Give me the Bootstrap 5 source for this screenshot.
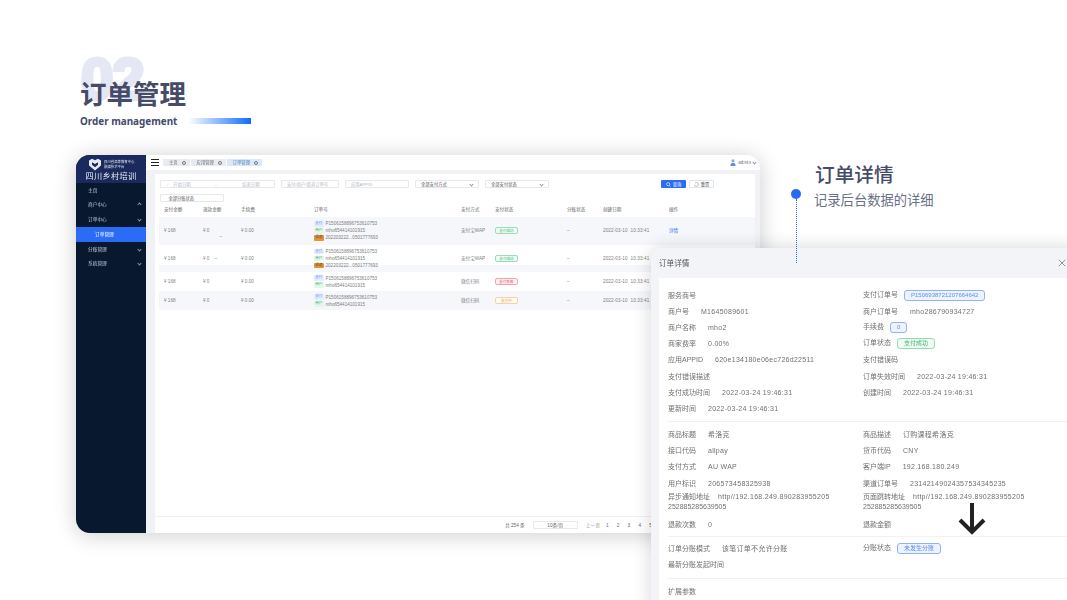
<!DOCTYPE html>
<html lang="zh-CN">

<head>
    <meta charset="UTF-8">
    <title>订单管理</title>
    <link href="https://cdn.jsdelivr.net/npm/bootstrap@5.3.0/dist/css/bootstrap.min.css" rel="stylesheet">
    <style>
        html, body {
            margin: 0;
            height: 600px;
            overflow: hidden;
            background: #fff;
            font-family: "Liberation Sans", "Noto Sans CJK SC", sans-serif;
        }

        .slide { position: relative; width: 1067px; height: 600px; overflow: hidden; }

        /* heading */
        .head-block { position: relative; padding: 77px 0 0 80px; }
        .ghost-no {
            position: absolute; left: 81px; top: 50px;
            font: 700 58px/1 "Liberation Sans", sans-serif;
            color: #e5e8f4; -webkit-text-stroke: 4px #e5e8f4; letter-spacing: -1px;
        }
        .head-title {
            position: relative; margin: 0;
            font: 700 26.5px/32px "Noto Sans CJK SC", sans-serif; color: #454b69;
        }
        .head-sub { position: relative; margin-top: 3px; gap: 11px; font: 700 9.9px/18px "Noto Sans", "Open Sans", sans-serif; color: #454b69; }
        .head-bar { width: 63px; height: 5.5px; background: linear-gradient(90deg, #fff, #0f6bff); }

        /* callout */
        .callout { position: absolute; left: 814px; top: 160px; }
        .callout-title { font: 500 19.7px/28px "Noto Sans CJK SC", sans-serif; color: #454b69; margin: 0 0 0 1px; }
        .callout-sub { font: 400 13.3px/20px "Noto Sans CJK SC", sans-serif; color: #6a7089; margin-top: 2px; }
        .pin-dot { position: absolute; left: 791px; top: 189px; width: 10px; height: 10px; border-radius: 50%; background: #2b6af2; z-index: 5; }
        .pin-line { position: absolute; left: 795.5px; top: 199px; height: 64px; border-left: 1px dotted #2b6af2; z-index: 5; }

        /* app window */
        .app-window {
            position: absolute; left: 76px; top: 155px; width: 684px; height: 378px;
            border-radius: 14px; overflow: hidden; background: #f1f2f6;
            box-shadow: 0 2px 22px rgba(0, 0, 0, .2);
            font-size: 4.7px; line-height: 7px; color: #777;
            font-family: "Liberation Sans", "Noto Sans CJK SC", sans-serif;
            filter: blur(.3px);
        }
        .side-nav { width: 70px; flex: none; background: #07182f; color: #c3cad8; }
        .side-brand { height: 28px; background: #1b2a5c; color: #fff; padding-top: 3px; }
        .brand-logo { gap: 2px; padding-left: 12px; height: 13px; }
        .brand-lines { font-size: 3.4px; line-height: 4.4px; color: #dfe3ee; }
        .brand-name { font-size: 8.2px; line-height: 11px; text-align: center; color: #e9ecf5; letter-spacing: .35px; }
        .side-item { height: 14.6px; padding: 0 5px 0 12px; }
        .side-item.active { background: #2b6cf6; color: #fff; padding-left: 19px; height: 15px; }
        .chev { display: inline-block; width: 3px; height: 3px; border-right: .6px solid #8d96a8; border-bottom: .6px solid #8d96a8; transform: rotate(45deg); }
        .chev.up { transform: rotate(225deg); }

        .top-strip { height: 15px; background: #fff; padding: 0 4px 0 5px; }
        .burger { width: 8px; height: 7px; border-top: 1px solid #222; border-bottom: 1px solid #222; position: relative; margin-right: 4px; }
        .burger::after { content: ""; position: absolute; left: 0; right: 0; top: 1.6px; border-top: 1px solid #222; }
        .tab-chip { height: 7px; background: #e9ebf0; padding: 0 4px 0 6px; margin-right: 1px; gap: 4px; color: #6c7280; font-size: 4.3px; }
        .tab-chip.current { background: #d8e9fb; color: #5a7fa8; }
        .tab-x { width: 4px; height: 4px; border: .5px solid #777; border-radius: 50%; }
        .who { gap: 2px; color: #777; }

        .work-card { position: absolute; left: 79px; top: 19px; width: 600px; bottom: 0; background: #fff; }
        .filter-line { height: 8px; padding-left: 5px; gap: 6px; margin-top: 6px; }
        .fbox { height: 8px; border: .5px solid #e6e8ec; border-radius: 1px; color: #b5b9c2; font-size: 4.3px; padding: 0 5px; flex: none; }
        .fbox.set { color: #555; }
        .w-range { width: 115px; }
        .w-key { width: 58px; }
        .w-app { width: 64px; }
        .w-sel { width: 64px; }
        .fbtn { height: 8px; width: 25px; font-size: 4.3px; gap: 2px; border-radius: 1px; }
        .fbtn-go { background: #2b6cf6; color: #fff; margin-left: 106px; }
        .fbtn-back { border: .5px solid #e3e5ea; color: #555; margin-left: -3px; }
        .grid-line {
            display: grid;
            grid-template-columns: 44px 38px 73px 147px 34px 72px 36px 66px 86px;
            align-items: center; margin-left: 4px; color: #808080; font-size: 4.6px;
        }
        .grid-line > div { min-width: 0; white-space: nowrap; }
        .line-head { height: 15px; color: #666; }
        .line-head > div:first-child, .grid-line > .money { padding-left: 5px; }
        .line-a { height: 27.5px; }
        .line-b { height: 19px; }
        .tint { background: #f5f7fa; }
        .tint-low { background: linear-gradient(#fff 20px, #f5f7fa 20px); }
        .dash-low { position: absolute; margin: 6px 0 0 10px; }
        .id-tag { display: inline-block; width: 9.5px; height: 5.6px; line-height: 5.6px; border-radius: 1px; text-align: center; font-size: 3.6px; margin-right: 2px; vertical-align: middle; }
        .t-pay { background: #e4edff; color: #5d8df0; }
        .t-mch { background: #e3f7ea; color: #4cb874; }
        .t-chn { background: #e0953c; color: #6e4a1c; }
        .stamp { letter-spacing: .12px; }
        .state-tag { display: inline-block; width: 23px; height: 7.4px; line-height: 6.4px; border-radius: 2px; text-align: center; font-size: 3.6px; border: .6px solid; }
        .s-ok { border-color: #9bdcb8; color: #41b677; background: #f1fbf5; }
        .s-bad { border-color: #f6a3ac; color: #e9414f; background: #fff3f4; }
        .s-wait { border-color: #f4d3a5; color: #e7a045; background: #fffaf2; }
        .act-link { color: #2b6cf6; }
        .pager { position: absolute; left: 0; right: 0; bottom: 0; height: 17px; border-top: .5px solid #f0f1f4; padding-left: 350px; color: #666; }
        .pager .pbox { width: 45px; height: 8px; border: .5px solid #e6e8ec; border-radius: 1px; margin: 0 8px; text-align: center; line-height: 7px; }
        .pager .pn { width: 10.8px; text-align: center; }
        .pager .prev-pg { margin-right: 2px; }

        /* detail dialog */
        .detail-box {
            position: absolute; left: 651px; top: 248px; width: 430px; height: 370px;
            border-radius: 10px; background: #f3f4f8;
            box-shadow: 0 0 18px rgba(0, 0, 0, .17);
            color: #707070; font-size: 7px; line-height: 9px;
            filter: blur(.25px);
        }
        .detail-top { height: 30px; padding-left: 8px; font-size: 7.6px; color: #555; }
        .detail-x { position: absolute; left: 407px; top: 11px; }
        .detail-panel { background: #fff; margin-left: 8px; height: 340px; padding: 9px 0 0 9px; }
        .kv-grid { display: grid; grid-template-columns: 195px 1fr; grid-auto-rows: 16.2px; align-items: center; }
        .kv-grid > div { white-space: nowrap; }
        .kv-grid span.v { margin-left: 12px; letter-spacing: .28px; }
        .kv-grid span.v.near { margin-left: 8px; }
        .kv-tall { grid-auto-rows: 26px; line-height: 10px; margin-top: -2px; margin-bottom: 1px; }
        .rule { height: 1px; background: #f0f1f4; margin: 4px 0 5px; }
        .rule.tight { margin-bottom: 3px; }
        .rule.wide { margin: 5.5px 0 4px; }
        .soft-pill { display: inline-block; height: 11px; line-height: 9.6px; border: .7px solid; border-radius: 3px; padding: 0 6px; font-size: 6px; margin-left: 6px; vertical-align: middle; }
        .p-blue { border-color: #8fb2ff; background: #edf3ff; color: #5d8df0; }
        .p-green { border-color: #93dcb2; background: #effbf3; color: #3fb673; }
        .down-mark { position: absolute; left: 958px; top: 502px; z-index: 6; }
    </style>
</head>

<body>
    <div class="slide">
        <div class="head-block">
            <div class="ghost-no">02</div>
            <h1 class="head-title">订单管理</h1>
            <div class="head-sub d-flex align-items-center">
                <span>Order management</span>
                <span class="head-bar"></span>
            </div>
        </div>

        <div class="callout">
            <h2 class="callout-title">订单详情</h2>
            <div class="callout-sub">记录后台数据的详细</div>
        </div>
        <div class="pin-dot"></div>
        <div class="pin-line"></div>

        <div class="app-window d-flex">
            <div class="side-nav">
                <div class="side-brand">
                    <div class="brand-logo d-flex align-items-center">
                        <svg width="14" height="13" viewBox="0 0 14 13">
                            <path d="M1 2.5 4 .8 7 2.3 10 .8 13 2.5V7.5L7 12.5 1 7.5Z" fill="#e6e9f2" />
                            <path d="M4 4.2 7 6 10 4.2V6.8L7 9.3 4 6.8Z" fill="#1b2a5c" />
                        </svg>
                        <div class="brand-lines">四川省高等教育中心<br>融媒技术平台</div>
                    </div>
                    <div class="brand-name">四川乡村培训</div>
                </div>
                <div class="side-item d-flex align-items-center">主页</div>
                <div class="side-item d-flex align-items-center justify-content-between">商户中心<i class="chev up"></i></div>
                <div class="side-item d-flex align-items-center justify-content-between">订单中心<i class="chev"></i></div>
                <div class="side-item active d-flex align-items-center">订单管理</div>
                <div class="side-item d-flex align-items-center justify-content-between">分账管理<i class="chev"></i></div>
                <div class="side-item d-flex align-items-center justify-content-between">系统管理<i class="chev"></i></div>
            </div>

            <div class="flex-grow-1">
                <div class="top-strip d-flex align-items-center">
                    <div class="burger"></div>
                    <div class="tab-chip d-flex align-items-center">主页<i class="tab-x"></i></div>
                    <div class="tab-chip d-flex align-items-center">应用管理<i class="tab-x"></i></div>
                    <div class="tab-chip current d-flex align-items-center">订单管理<i class="tab-x"></i></div>
                    <div class="who d-flex align-items-center ms-auto">
                        <svg width="6" height="7" viewBox="0 0 6 7">
                            <circle cx="3" cy="1.7" r="1.5" fill="#7fa8e8" />
                            <path d="M.4 7C.4 4.8 1.5 3.7 3 3.7S5.6 4.8 5.6 7Z" fill="#5c8fe0" />
                        </svg>
                        <span>admin</span><i class="chev"></i>
                    </div>
                </div>

                <div class="work-card">
                    <div class="filter-line d-flex align-items-center">
                        <div class="fbox w-range d-flex align-items-center justify-content-between">
                            <span>&#9675;&nbsp;&nbsp;&nbsp;&nbsp;开始日期</span><span>–</span><span>&nbsp;结束日期&nbsp;&nbsp;&nbsp;&nbsp;&nbsp;&nbsp;&nbsp;&nbsp;</span>
                        </div>
                        <div class="fbox w-key d-flex align-items-center">支付/商户/渠道订单号</div>
                        <div class="fbox w-app d-flex align-items-center">应用APPID</div>
                        <div class="fbox set w-sel d-flex align-items-center justify-content-between">全部支付方式<i class="chev"></i></div>
                        <div class="fbox set w-sel d-flex align-items-center justify-content-between">全部支付状态<i class="chev"></i></div>
                        <div class="fbtn fbtn-go d-flex align-items-center justify-content-center">
                            <svg width="5" height="5" viewBox="0 0 5 5"><circle cx="2.2" cy="2.2" r="1.6" fill="none" stroke="#fff" stroke-width=".6" /><path d="M3.4 3.4 4.6 4.6" stroke="#fff" stroke-width=".6" /></svg>查询
                        </div>
                        <div class="fbtn fbtn-back d-flex align-items-center justify-content-center">
                            <svg width="5" height="5" viewBox="0 0 5 5"><path d="M1 1.2A1.9 1.9 0 1 1 .6 2.6" fill="none" stroke="#777" stroke-width=".5" /></svg>重置
                        </div>
                    </div>
                    <div class="filter-line d-flex align-items-center">
                        <div class="fbox set w-sel d-flex align-items-center">&nbsp;&nbsp;全部分账状态</div>
                    </div>

                    <div class="grid-line line-head">
                        <div>支付金额</div><div>退款金额</div><div>手续费</div><div>订单号</div><div>支付方式</div><div>支付状态</div><div>分账状态</div><div>创建日期</div><div>操作</div>
                    </div>

                    <div class="grid-line line-a tint">
                        <div class="money">¥ 168</div><div>¥ 0<span class="dash-low">–</span></div><div>¥ 0.00</div>
                        <div>
                            <div><i class="id-tag t-pay fst-normal">支付</i>P1506158896753610753</div>
                            <div><i class="id-tag t-mch fst-normal">商户</i>mho654414101915</div>
                            <div><i class="id-tag t-chn fst-normal">渠道</i>202203222...0501777693</div>
                        </div>
                        <div>支付宝WAP</div><div><span class="state-tag s-ok">支付成功</span></div><div>–</div><div class="stamp">2022-03-10&nbsp;&nbsp;10:33:41</div><div class="act-link">详情</div>
                    </div>
                    <div class="grid-line line-a tint-low">
                        <div class="money">¥ 168</div><div>¥ 0&nbsp;&nbsp;&nbsp;&nbsp;–</div><div>¥ 0.00</div>
                        <div>
                            <div><i class="id-tag t-pay fst-normal">支付</i>P1506158896753610753</div>
                            <div><i class="id-tag t-mch fst-normal">商户</i>mho654414101915</div>
                            <div><i class="id-tag t-chn fst-normal">渠道</i>202203222...0501777693</div>
                        </div>
                        <div>支付宝WAP</div><div><span class="state-tag s-ok">支付成功</span></div><div>–</div><div class="stamp">2022-03-10&nbsp;&nbsp;10:33:41</div><div></div>
                    </div>
                    <div class="grid-line line-b">
                        <div class="money">¥ 168</div><div>¥ 0</div><div>¥ 0.00</div>
                        <div>
                            <div><i class="id-tag t-pay fst-normal">支付</i>P1506158896753610753</div>
                            <div><i class="id-tag t-mch fst-normal">商户</i>mho654414101915</div>
                        </div>
                        <div>微信扫码</div><div><span class="state-tag s-bad">支付失败</span></div><div>–</div><div class="stamp">2022-03-10&nbsp;&nbsp;10:33:41</div><div></div>
                    </div>
                    <div class="grid-line line-b tint">
                        <div class="money">¥ 168</div><div>¥ 0</div><div>¥ 0.00</div>
                        <div>
                            <div><i class="id-tag t-pay fst-normal">支付</i>P1506158896753610753</div>
                            <div><i class="id-tag t-mch fst-normal">商户</i>mho654414101915</div>
                        </div>
                        <div>微信扫码</div><div><span class="state-tag s-wait">支付中</span></div><div>–</div><div class="stamp">2022-03-10&nbsp;&nbsp;10:33:41</div><div></div>
                    </div>

                    <div class="pager d-flex align-items-center">
                        <span>共 254 条</span>
                        <span class="pbox">10条/页</span>
                        <span class="text-black-50 prev-pg">上一页</span>
                        <span class="pn act-link">1</span><span class="pn">2</span><span class="pn">3</span><span class="pn">4</span><span class="pn">5</span>
                    </div>
                </div>
            </div>
        </div>

        <div class="detail-box">
            <div class="detail-top d-flex align-items-center">订单详情</div>
            <svg class="detail-x" width="8" height="8" viewBox="0 0 8 8"><path d="M.8.8 7.2 7.2M7.2.8.8 7.2" stroke="#777" stroke-width=".8" /></svg>
            <div class="detail-panel">
                <div class="kv-grid">
                    <div>服务商号</div>
                    <div>支付订单号<span class="soft-pill p-blue">P1506938721207664642</span></div>
                    <div>商户号<span class="v">M1645089601</span></div>
                    <div>商户订单号<span class="v">mho286790934727</span></div>
                    <div>商户名称<span class="v">mho2</span></div>
                    <div>手续费<span class="soft-pill p-blue">0</span></div>
                    <div>商家费率<span class="v">0.00%</span></div>
                    <div>订单状态<span class="soft-pill p-green">支付成功</span></div>
                    <div>应用APPID<span class="v">620e134180e06ec726d22511</span></div>
                    <div>支付错误码</div>
                    <div>支付错误描述</div>
                    <div>订单失效时间<span class="v">2022-03-24 19:46:31</span></div>
                    <div>支付成功时间<span class="v">2022-03-24 19:46:31</span></div>
                    <div>创建时间<span class="v">2022-03-24 19:46:31</span></div>
                    <div>更新时间<span class="v">2022-03-24 19:46:31</span></div>
                </div>
                <div class="rule"></div>
                <div class="kv-grid">
                    <div>商品标题<span class="v">希洛克</span></div>
                    <div>商品描述<span class="v">订购课程希洛克</span></div>
                    <div>接口代码<span class="v">allpay</span></div>
                    <div>货币代码<span class="v">CNY</span></div>
                    <div>支付方式<span class="v">AU WAP</span></div>
                    <div>客户端IP<span class="v">192.168.180.249</span></div>
                    <div>用户标识<span class="v">206573458325938</span></div>
                    <div>渠道订单号<span class="v">23142149024357534345235</span></div>
                </div>
                <div class="kv-grid kv-tall">
                    <div>异步通知地址<span class="v near">http//192.168.249.890283955205</span><br><span>252885285639505</span></div>
                    <div>页面跳转地址<span class="v near">http//192.168.249.890283955205</span><br><span>252885285639505</span></div>
                </div>
                <div class="kv-grid">
                    <div>退款次数<span class="v">0</span></div>
                    <div>退款金额</div>
                </div>
                <div class="rule tight"></div>
                <div class="kv-grid">
                    <div>订单分账模式<span class="v">该笔订单不允许分账</span></div>
                    <div>分账状态<span class="soft-pill p-blue">未发生分账</span></div>
                    <div>最新分账发起时间</div>
                    <div></div>
                </div>
                <div class="rule wide"></div>
                <div class="kv-grid">
                    <div>扩展参数</div>
                    <div></div>
                </div>
            </div>
        </div>

        <svg class="down-mark" width="28" height="33" viewBox="0 0 28 33">
            <path d="M14 1V30M2 18 14 30 26 18" fill="none" stroke="#222" stroke-width="4" />
        </svg>
    </div>

    <script src="https://cdn.jsdelivr.net/npm/bootstrap@5.3.0/dist/js/bootstrap.bundle.min.js"></script>
</body>

</html>
